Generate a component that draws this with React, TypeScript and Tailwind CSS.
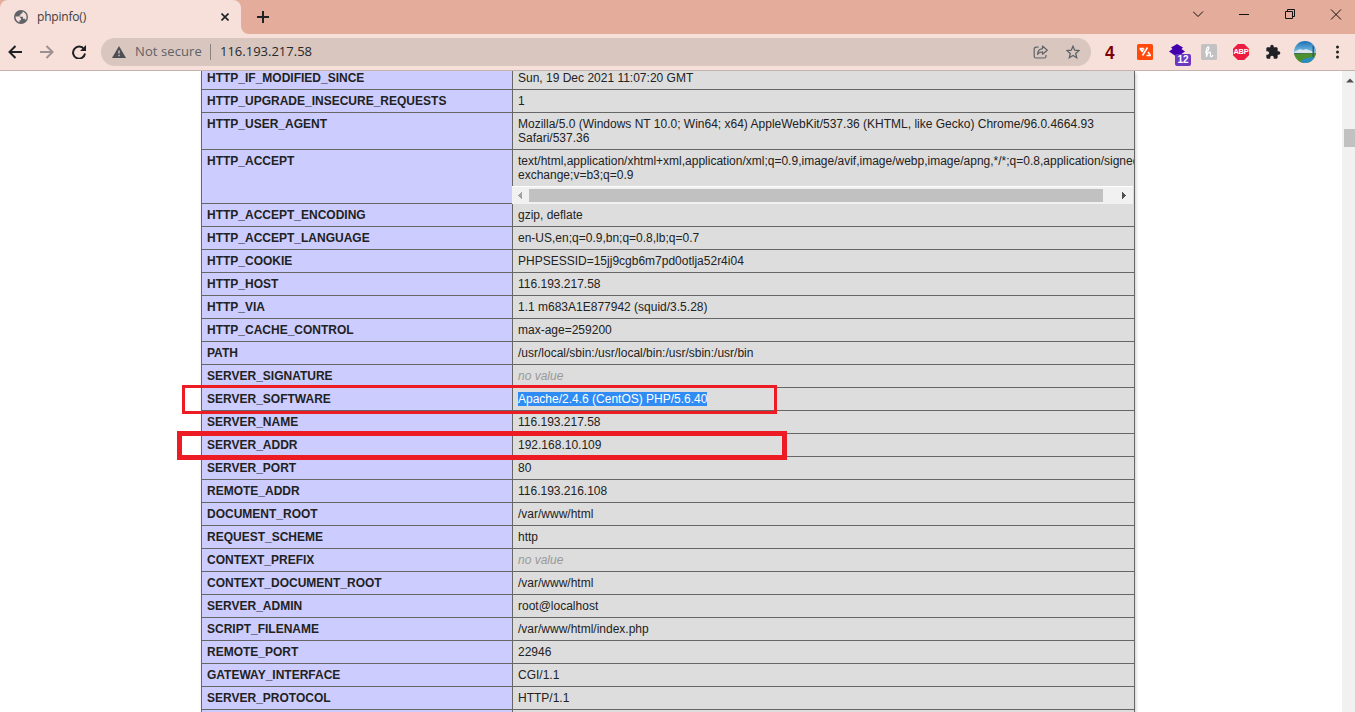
import React from "react";

type Row = { k: string; v: string[]; none?: boolean; sel?: boolean; scroll?: boolean };

const rows: Row[] = [
  { k: "HTTP_UPGRADE_INSECURE_REQUESTS", v: ["1"] },
  {
    k: "HTTP_USER_AGENT",
    v: [
      "Mozilla/5.0 (Windows NT 10.0; Win64; x64) AppleWebKit/537.36 (KHTML, like Gecko) Chrome/96.0.4664.93",
      "Safari/537.36",
    ],
  },
  {
    k: "HTTP_ACCEPT",
    v: [
      "text/html,application/xhtml+xml,application/xml;q=0.9,image/avif,image/webp,image/apng,*/*;q=0.8,application/signed",
      "exchange;v=b3;q=0.9",
    ],
    scroll: true,
  },
  { k: "HTTP_ACCEPT_ENCODING", v: ["gzip, deflate"] },
  { k: "HTTP_ACCEPT_LANGUAGE", v: ["en-US,en;q=0.9,bn;q=0.8,lb;q=0.7"] },
  { k: "HTTP_COOKIE", v: ["PHPSESSID=15jj9cgb6m7pd0otlja52r4i04"] },
  { k: "HTTP_HOST", v: ["116.193.217.58"] },
  { k: "HTTP_VIA", v: ["1.1 m683A1E877942 (squid/3.5.28)"] },
  { k: "HTTP_CACHE_CONTROL", v: ["max-age=259200"] },
  { k: "PATH", v: ["/usr/local/sbin:/usr/local/bin:/usr/sbin:/usr/bin"] },
  { k: "SERVER_SIGNATURE", v: ["no value"], none: true },
  { k: "SERVER_SOFTWARE", v: ["Apache/2.4.6 (CentOS) PHP/5.6.40"], sel: true },
  { k: "SERVER_NAME", v: ["116.193.217.58"] },
  { k: "SERVER_ADDR", v: ["192.168.10.109"] },
  { k: "SERVER_PORT", v: ["80"] },
  { k: "REMOTE_ADDR", v: ["116.193.216.108"] },
  { k: "DOCUMENT_ROOT", v: ["/var/www/html"] },
  { k: "REQUEST_SCHEME", v: ["http"] },
  { k: "CONTEXT_PREFIX", v: ["no value"], none: true },
  { k: "CONTEXT_DOCUMENT_ROOT", v: ["/var/www/html"] },
  { k: "SERVER_ADMIN", v: ["root@localhost"] },
  { k: "SCRIPT_FILENAME", v: ["/var/www/html/index.php"] },
  { k: "REMOTE_PORT", v: ["22946"] },
  { k: "GATEWAY_INTERFACE", v: ["CGI/1.1"] },
  { k: "SERVER_PROTOCOL", v: ["HTTP/1.1"] },
];

function HorizontalScrollbar() {
  return (
    <div className="mr-px flex h-[18px] items-center border-t border-white bg-[#f1f1f1]">
      <svg className="h-[17px] w-[17px] shrink-0" viewBox="0 0 17 17" shapeRendering="crispEdges">
        <path d="M6 8.500 10 4.500v8z" fill="#a3a3a3" />
      </svg>
      <div className="h-[13px] w-[574px] shrink-0 bg-[#c1c1c1]" />
      <div className="grow" />
      <svg className="mr-px h-[17px] w-[17px] shrink-0" viewBox="0 0 17 17" shapeRendering="crispEdges">
        <path d="M11 8.500 7 4.500v8z" fill="#505050" />
      </svg>
    </div>
  );
}

function InfoRow({ row, first }: { row: Row; first?: boolean }) {
  return (
    <div className="flex">
      <div
        className={`w-[310px] shrink-0 border-b border-[#666] bg-[#ccccff] pl-[5px] font-bold ${first ? "pt-0 pb-1" : "py-1"}`}
      >
        {row.k}
      </div>
      <div
        className={`w-[622px] shrink-0 overflow-hidden bg-[#dddddd] ${row.scroll ? "" : "border-b border-l border-[#666]"}`}
      >
        <div
          className={`whitespace-nowrap ${row.scroll ? "border-l border-[#666]" : ""} pl-[5px] ${first ? "pt-0 pb-1" : "py-1"}`}
        >
          {row.v.map((line) => (
            <div key={line}>
              <span className={row.none ? "italic text-[#999]" : row.sel ? "bg-[#2f8cf5] text-white" : ""}>{line}</span>
            </div>
          ))}
        </div>
        {row.scroll && <HorizontalScrollbar />}
      </div>
    </div>
  );
}

function TabStrip() {
  return (
    <div className="flex h-[34px] shrink-0 bg-[#e4ac9a]">
      <div className="flex h-[34px] w-[241px] shrink-0 items-center rounded-t-[8px] bg-[#f6e0d9] pl-[14px]">
        <svg className="h-[14px] w-[14px] shrink-0" viewBox="0 0 14 14">
          <circle cx="7" cy="7" r="7" fill="#5f6368" />
          <path d="M1.500 6.500H5L7.200 8.800 6.800 10.300H5.500v2C3 11.500 1.500 9.500 1.500 6.500zM8.500 1.500v1.700L6.500 4v1.500H5.300V6.800H9v2h2l.8 1.400C13.200 8 13 3 8.500 1.500z" fill="#f6e0d9" />
        </svg>
        <span className="ml-[9px] grow text-[12px] tracking-[-0.2px] text-[#3c3c3c]">phpinfo()</span>
        <svg className="mr-[12px] h-2 w-2" viewBox="0 0 8 8">
          <path d="M.5.5l7 7m0-7l-7 7" stroke="#202124" strokeWidth="1.600" />
        </svg>
      </div>
      <div className="h-[34px] w-2 bg-[#f6e0d9]">
        <div className="h-[34px] w-2 rounded-bl-[8px] bg-[#e4ac9a]" />
      </div>
      <svg className="ml-2 mt-[11px] h-3 w-3" viewBox="0 0 12 12">
        <path d="M6 0v12M0 6h12" stroke="#202124" strokeWidth="2" />
      </svg>
      <div className="grow" />
      <svg className="mt-[6px] h-4 w-[162px]" viewBox="0 0 162 16" fill="none" stroke="#111" strokeWidth="1">
        <path d="M0 5.500l5 5 5-5" />
        <path d="M46 8.500h10" />
        <path d="M92.500 5.500h7v7h-7zM94.500 5.500v-2h7v7h-2" />
        <path d="M138 3.500l10 10m0-10l-10 10" />
      </svg>
    </div>
  );
}

function Toolbar() {
  return (
    <div className="flex h-[37px] shrink-0 items-center border-b border-[#c4b2ac] bg-[#f6e0d9]">
      <svg className="ml-2 h-[14px] w-[82px] shrink-0" viewBox="0 0 82 14" fill="none" strokeWidth="2">
        <path d="M14 7H1.500M7.500 1l-6 6 6 6" stroke="#202124" />
        <path d="M32 7h12.500M38.500 1l6 6-6 6" stroke="#9c9190" />
        <path d="M76 4.200A6 6 0 1 0 77 8.500" stroke="#202124" />
        <path d="M78 0v6h-6z" fill="#202124" />
      </svg>
      <div className="ml-[11px] flex h-7 w-[990px] shrink-0 items-center rounded-full bg-[#d8c6bf] text-[13px]">
        <svg className="ml-[11px] h-3 w-[14px] shrink-0" viewBox="0 0 14 12">
          <path d="M7 0l7 12H0z" fill="#4c4f54" />
          <path d="M7 4.500v3M7 8.800v1.400" stroke="#d8c6bf" strokeWidth="1.400" />
        </svg>
        <span className="ml-[9px] w-[75px] tracking-[0.1px] text-[#606166]">Not secure</span>
        <span className="h-4 w-px bg-[#8b8280]" />
        <span className="ml-[9px] grow text-[#27282b]">116.193.217.58</span>
        <svg className="mr-[17px] h-[14px] w-4" viewBox="0 0 16 14" fill="none" stroke="#5f6368" strokeWidth="1.200">
          <path d="M5.500 2.200H3a1.800 1.800 0 0 0-1.800 1.800v7.200A1.800 1.800 0 0 0 3 13h8.200a1.800 1.800 0 0 0 1.800-1.800V10" />
          <path d="M9.500 1l4.800 4.200-4.800 4V6.800C7 6.800 5.600 7.600 4.500 9.300c.3-3 2-5.200 5-5.600z" strokeLinejoin="round" />
        </svg>
        <svg className="mr-[11px] h-[14px] w-[14px]" viewBox="0 0 14 14" fill="none" stroke="#5f6368" strokeWidth="1.300">
          <path d="M7 1.200l1.700 4 4.300.4-3.300 2.800 1 4.300L7 10.400l-3.700 2.300 1-4.300L1 5.600l4.300-.4z" />
        </svg>
      </div>
      <Extensions />
    </div>
  );
}

function Extensions() {
  return (
    <div className="flex grow items-center">
      <span className="ml-[14px] w-[10px] font-['Liberation_Sans'] text-[19px] leading-none font-bold text-[#7d0000]">
        <span className="inline-block origin-left scale-x-90">4</span>
      </span>
      <svg className="ml-[22px] h-4 w-4" viewBox="0 0 16 16" fill="none">
        <rect width="16" height="16" rx="1.500" fill="#ff4a0c" />
        <path d="M2.500 4.500H6.500M3 4.500 5.500 8M5.500 11.500 10.500 3.500M9.500 11.500H14M13.500 11.500 11 8M7 4.500 5 8" stroke="#fff" strokeWidth="1.500" />
      </svg>
      <div className="relative ml-4 h-4 w-4">
        <svg className="h-4 w-4" viewBox="0 0 16 16">
          <path d="M8 0l6 3.500-1.500 1.500L16 7.500 8 13 0 7.500 3.500 5 2 3.500z" fill="#4300ae" />
        </svg>
        <span className="absolute top-[10px] left-[6px] flex h-3 w-4 items-center justify-center rounded-[2px] bg-[#6b38c2] font-['Liberation_Sans'] text-[10px] leading-none font-bold text-white">12</span>
      </div>
      <svg className="ml-4 h-4 w-4" viewBox="0 0 16 16" fill="none">
        <rect width="16" height="16" rx="1.500" fill="#c2c2c2" />
        <path d="M4 8.500C6.500 7.500 8.500 5 7.800 3.500S5.500 4 5.500 6v7c.5-3 1.800-4.800 3.200-4.800s.1 3.800 1.100 4.300S11.500 12 12 11" stroke="#fff" strokeWidth="1.300" />
      </svg>
      <div className="ml-4 flex h-4 w-4 items-center justify-center bg-[#ec1c40] font-['Liberation_Sans'] text-[7.500px] leading-none font-bold tracking-[-0.2px] text-white [clip-path:polygon(30%_0,70%_0,100%_30%,100%_70%,70%_100%,30%_100%,0_70%,0_30%)]">ABP</div>
      <svg className="ml-4 h-4 w-4" viewBox="0 0 24 24">
        <path d="M20.500 11H19V7c0-1.100-.9-2-2-2h-4V3.500a2.500 2.500 0 0 0-5 0V5H4c-1.100 0-2 .9-2 2v3.800h1.500a2.700 2.700 0 0 1 0 5.400H2V20c0 1.100.9 2 2 2h3.800v-1.500a2.700 2.700 0 0 1 5.400 0V22H17c1.100 0 2-.9 2-2v-4h1.500a2.500 2.500 0 0 0 0-5z" fill="#202124" />
      </svg>
      <svg className="ml-[13px] h-[22px] w-[22px]" viewBox="0 0 22 22">
        <defs>
          <clipPath id="avatar"><circle cx="11" cy="11" r="11" /></clipPath>
          <linearGradient id="sky" x1="0" y1="0" x2="0" y2="1">
            <stop offset="0" stopColor="#1c6fb4" />
            <stop offset="1" stopColor="#83c8e8" />
          </linearGradient>
        </defs>
        <g clipPath="url(#avatar)">
          <path d="M0 0h22v12H0z" fill="url(#sky)" />
          <path d="M0 11l6-3 3 1 3-1 8 3-2 2H2z" fill="#dbe5ea" />
          <path d="M0 12h22v2H0z" fill="#42606a" />
          <path d="M0 13l22-1v10H0z" fill="#4d9030" />
          <path d="M7 20q5-4 15-4v6H7z" fill="#2b8cc4" />
          <path d="M18.500 5h1.500v11h-1.500z" fill="#35597a" />
        </g>
      </svg>
      <svg className="ml-5 h-[14px] w-[3px]" viewBox="0 0 3 14" fill="#202124">
        <circle cx="1.500" cy="2" r="1.500" /><circle cx="1.500" cy="7" r="1.500" /><circle cx="1.500" cy="12" r="1.500" />
      </svg>
    </div>
  );
}

export default function App() {
  return (
    <div className="flex h-[712px] w-[1355px] flex-col overflow-hidden bg-white font-['Open_Sans',sans-serif]">
      <TabStrip />
      <Toolbar />
      <div className="flex min-h-0 grow overflow-hidden">
        <div className="relative grow overflow-hidden pl-[201px] font-['Liberation_Sans',Arial,sans-serif] text-[12px] leading-[14px] text-[#222]">
          <div className="w-[934px] border-x border-[#666] shadow-[1px_2px_3px_#ccc]">
            <InfoRow row={{ k: "HTTP_IF_MODIFIED_SINCE", v: ["Sun, 19 Dec 2021 11:07:20 GMT"] }} first />
            {rows.map((row) => (
              <InfoRow key={row.k} row={row} />
            ))}
            <div className="flex h-5">
              <div className="w-[310px] bg-[#ccccff]" />
              <div className="grow border-l border-[#666] bg-[#dddddd]" />
            </div>
          </div>
          <div className="absolute top-[314px] left-[182px] h-[29px] w-[595px] border-[3px] border-[#ed1c24]" />
          <div className="absolute top-[360px] left-[177px] h-[29px] w-[610px] border-[5px] border-[#ed1c24]" />
        </div>
        <div className="flex w-[13px] shrink-0 flex-col bg-[#f1f1f1] pl-[2px]">
          <svg className="mt-[5px] ml-[2px] h-2 w-2 shrink-0" viewBox="0 0 8 8">
            <path d="M0 6.500 4 2.500l4 4z" fill="#505050" />
          </svg>
          <div className="mt-[45px] h-[18px] shrink-0 bg-[#c1c1c1]" />
        </div>
      </div>
    </div>
  );
}
